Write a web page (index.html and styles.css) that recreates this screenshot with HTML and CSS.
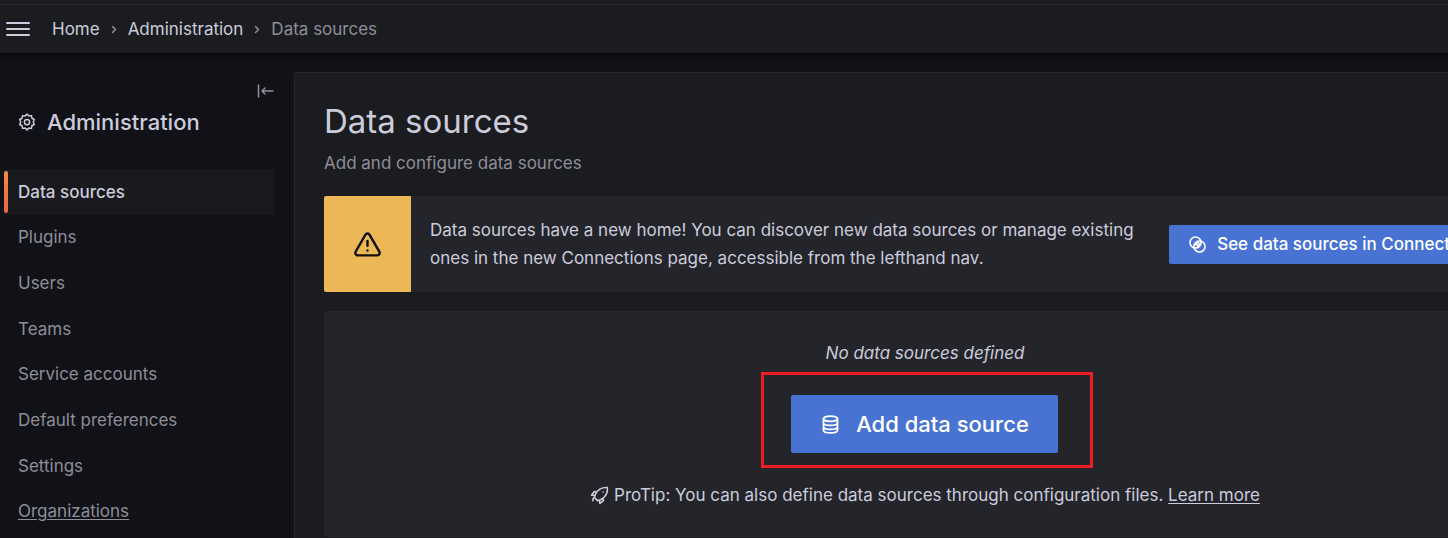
FILE: index.html
```html
<!DOCTYPE html>
<html lang="en">
<head>
<meta charset="utf-8">
<title>Data sources - Administration</title>
<link rel="stylesheet" href="styles.css">
</head>
<body>
<header class="topbar">
  <button class="icon-button" aria-label="Open menu">
    <svg class="menu-icon" viewBox="0 0 24 16" fill="none" stroke="currentColor" stroke-width="2" stroke-linecap="round"><path d="M1 2h22M1 8h22M1 14h22"/></svg>
  </button>
  <nav class="breadcrumbs" aria-label="Breadcrumbs">
    <a href="#">Home</a>
    <svg class="chevron" viewBox="0 0 6 10" fill="none" stroke="currentColor" stroke-width="1.500" stroke-linecap="round" stroke-linejoin="round"><path d="M1.500 2.500 4.500 5.500 1.500 8.500"/></svg>
    <a href="#">Administration</a>
    <svg class="chevron" viewBox="0 0 6 10" fill="none" stroke="currentColor" stroke-width="1.500" stroke-linecap="round" stroke-linejoin="round"><path d="M1.500 2.500 4.500 5.500 1.500 8.500"/></svg>
    <span class="current">Data sources</span>
  </nav>
</header>
<div class="layout">
  <aside class="sidebar">
    <button class="icon-button dock" aria-label="Collapse section">
      <svg class="dock-icon" viewBox="0 0 18 14" fill="none" stroke="currentColor" stroke-width="1.500" stroke-linecap="round" stroke-linejoin="round"><path d="M1.500 1v12M16 7H5M8 4 5 7l3 3"/></svg>
    </button>
    <h2 class="section-title">
      <svg class="cog-icon" viewBox="0 0 24 24" fill="none" stroke="currentColor" stroke-width="2" stroke-linejoin="round"><path d="M9.500 4 12 1.500 14.500 4l3.500-.5.500 3.500 3.300 1.700L20.300 12l1.500 3.300-3.300 1.700-.5 3.500-3.500-.5L12 22.500 9.500 20l-3.500.5-.5-3.500-3.300-1.700L3.700 12 2.200 8.700 5.500 7 6 3.500z"/><circle cx="12" cy="12" r="3.500"/></svg>
      Administration
    </h2>
    <nav class="section-nav" aria-label="Administration">
      <a class="active" href="#" aria-current="page">Data sources</a>
      <a href="#">Plugins</a>
      <a href="#">Users</a>
      <a href="#">Teams</a>
      <a href="#">Service accounts</a>
      <a href="#">Default preferences</a>
      <a href="#">Settings</a>
      <a class="hovered" href="#">Organizations</a>
    </nav>
  </aside>
  <main class="page">
    <h1>Data sources</h1>
    <p class="subtitle">Add and configure data sources</p>
    <section class="alert">
      <div class="alert-icon">
        <svg class="warning-icon" viewBox="0 0 24 24" fill="currentColor"><path d="M12,16a1,1,0,1,0,1,1A1,1,0,0,0,12,16Zm10.670,1.470-8.050-14a3,3,0,0,0-5.240,0l-8,14A3,3,0,0,0,3.940,22H20.060a3,3,0,0,0,2.610-4.530Zm-1.730,2a1,1,0,0,1-.88.510H3.940a1,1,0,0,1-.88-.510,1,1,0,0,1,0-1l8-14a1,1,0,0,1,1.780,0l8.050,14A1,1,0,0,1,20.940,19.490ZM12,8a1,1,0,0,0-1,1v4a1,1,0,0,0,2,0V9A1,1,0,0,0,12,8Z"/></svg>
      </div>
      <p class="alert-text">Data sources have a new home! You can discover new data sources or manage existing ones in the new Connections page, accessible from the lefthand nav.</p>
      <a class="button" href="#">
        <svg class="link-icon" viewBox="0 0 24 24" fill="none" stroke="currentColor" stroke-width="2"><circle cx="9.500" cy="9.500" r="7"/><circle cx="14.500" cy="14.500" r="7"/><path d="M8 13 13 8M11 16 16 11M10 11l3 3M12 9l3 3"/></svg>
        See data sources in Connections
      </a>
    </section>
    <section class="empty">
      <p class="empty-title">No data sources defined</p>
      <div class="highlight">
        <a class="button large" href="#">
          <svg class="db-icon" viewBox="0 0 24 24" fill="none" stroke="currentColor" stroke-width="2"><ellipse cx="12" cy="5.500" rx="8" ry="3"/><path d="M4 5.500v13c0 1.700 3.600 3 8 3s8-1.300 8-3v-13M4 10c0 1.700 3.600 3 8 3s8-1.300 8-3M4 14.500c0 1.700 3.600 3 8 3s8-1.300 8-3"/></svg>
          Add data source
        </a>
      </div>
      <p class="protip">
        <svg class="rocket-icon" viewBox="0 0 24 24" fill="none" stroke="currentColor" stroke-width="2" stroke-linejoin="round" stroke-linecap="round"><path d="M7 10C10 4.500 15 1.500 22 2c.5 7-2.500 12-8 15l-4.500 1.500-4-4zM8.500 7.500 5.500 7 2 11.500l4 .5M16.500 15.500l.5 3-4.500 3.500-.5-4M5.500 14.500c-1.500.500-2 2-2 4M16.500 7.500h.01"/></svg>
        <span>ProTip: You can also define data sources through configuration files. <a href="#">Learn more</a></span>
      </p>
    </section>
  </main>
</div>
</body>
</html>
```
FILE: styles.css
```css
* { box-sizing: border-box; }

body {
  margin: 0;
  min-height: 100vh;
  display: flex;
  flex-direction: column;
  background: #111217;
  color: #ccccdc;
  font: 17px/28px Inter, "Liberation Sans", sans-serif;
  overflow: hidden;
}

h1, h2, p { margin: 0; font-weight: 400; }
a { color: inherit; text-decoration: none; }
svg { display: block; flex: none; }

.icon-button {
  padding: 0;
  border: 0;
  background: none;
  color: inherit;
}

.topbar {
  position: relative;
  display: flex;
  align-items: center;
  gap: 22px;
  height: 53px;
  padding: 4px 6px 0;
  background: #1b1c20;
  box-shadow: 0 1px 6px #000;
}
.topbar::before {
  content: "";
  position: absolute;
  inset: 4px 0 auto;
  height: 1px;
  background: #28292e;
}
.menu-icon { width: 24px; height: 16px; }
.breadcrumbs { display: flex; align-items: center; gap: 11px; }
.breadcrumbs .current, .chevron { color: #8e8e99; }
.chevron { width: 6px; height: 10px; }

.layout { flex: 1; display: flex; }

.sidebar {
  flex: none;
  width: 294px;
  padding: 31px 19px 0 4px;
  display: flex;
  flex-direction: column;
}
.dock { align-self: flex-end; color: #8e8e99; }
.dock-icon { width: 18px; height: 14px; }
.section-title {
  display: flex;
  align-items: center;
  gap: 11px;
  padding: 10px 0 33px 14px;
  font-size: 22px;
  font-weight: 500;
}
.cog-icon { width: 18px; height: 18px; }

.section-nav {
  display: grid;
  grid-auto-rows: 1fr;
  min-height: 365px;
}
.section-nav a {
  position: relative;
  display: flex;
  align-items: center;
  padding-left: 14px;
  border-radius: 2px;
  color: #8e8e99;
}
.section-nav .active { background: #191a1d; color: #ccccdc; font-weight: 500; }
.section-nav .active::before {
  content: "";
  position: absolute;
  inset: 2px auto 2px 0;
  width: 4px;
  border-radius: 2px;
  background: linear-gradient(#f08c43, #ec6446);
}
.section-nav .hovered { text-decoration: underline; text-underline-offset: 2px; }

.page {
  flex: 1;
  min-width: 0;
  margin: 19px -107px 0 0;
  padding: 26px 29px 1px;
  display: flex;
  flex-direction: column;
  background: #1b1c20;
  border: 1px solid #26272b;
  border-width: 1px 0 0 1px;
  border-radius: 2px 0 0 0;
}
.page h1 { font-size: 33px; line-height: 44px; }
.subtitle { padding: 6px 0 19px; color: #8e8e99; }

.alert {
  display: flex;
  align-items: center;
  min-height: 96px;
  background: #24252b;
  border-radius: 2px;
}
.alert-icon {
  align-self: stretch;
  width: 87px;
  flex: none;
  display: grid;
  place-items: center;
  border-radius: 2px 0 0 2px;
  background: #ecb857;
  color: #111;
}
.warning-icon { width: 29px; height: 29px; }
.alert-text { flex: 1; padding: 0 19px; }

.button {
  flex: none;
  display: flex;
  align-items: center;
  gap: 10px;
  height: 39px;
  margin-right: 23px;
  padding: 0 19px;
  border-radius: 2px;
  background: #4873d3;
  color: #fff;
  font-weight: 500;
}
.link-icon { width: 19px; height: 19px; }

.empty {
  flex: 1;
  margin-top: 19px;
  padding: 28px 0;
  display: flex;
  flex-direction: column;
  align-items: center;
  background: #24252b;
  border-radius: 2px;
}
.empty-title { font-style: italic; }
.highlight {
  margin: 5px 0 13px 4px;
  padding: 20px 32px 12px 27px;
  border: 3px solid #ec1c24;
}
.button.large {
  height: 58px;
  margin: 0;
  gap: 15px;
  padding: 0 29px;
  font-size: 22px;
}
.db-icon { width: 21px; height: 21px; }
.protip { display: flex; align-items: center; gap: 5px; }
.protip a { text-decoration: underline; text-underline-offset: 2px; }
.rocket-icon { width: 19px; height: 19px; }
```
